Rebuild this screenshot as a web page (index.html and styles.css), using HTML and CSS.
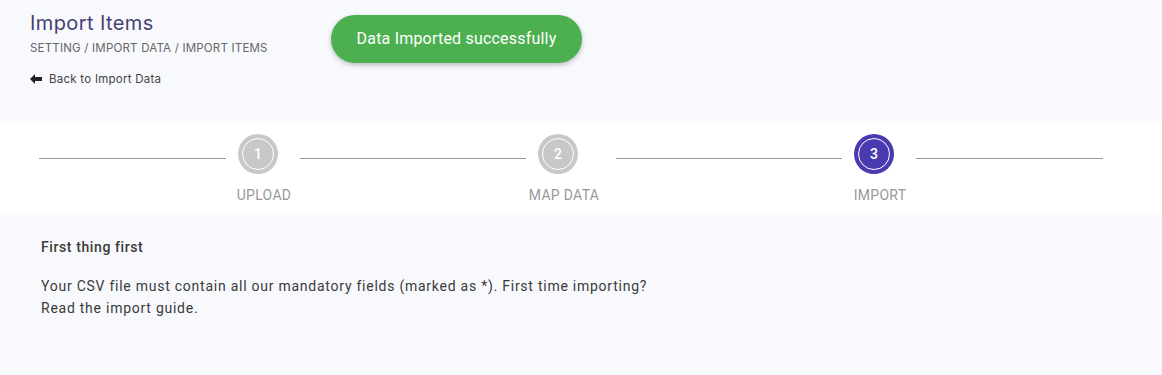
FILE: index.html
```html
<!doctype html>
<html>
<head>
<title>Import Items</title>
<link rel="stylesheet" href="styles.css">
</head>
<body>

<div class="header">
	<h1 class="title">Import Items</h1>
	<div class="breadcrumb">SETTING / IMPORT DATA / IMPORT ITEMS</div>
	<a class="back" href="#">
		<svg width="12" height="10" viewBox="0 0 12 10"><path d="M0 5 L5 0 L5 3 L12 3 L12 7 L5 7 L5 10 Z" fill="#222"/></svg>
		Back to Import Data
	</a>
</div>

<div class="toast">Data Imported successfully</div>

<div class="stepper">
	<div class="line first"></div>
	<div class="step">
		<div class="circle"><span>1</span></div>
		<div class="label">UPLOAD</div>
	</div>
	<div class="line"></div>
	<div class="step wide">
		<div class="circle"><span>2</span></div>
		<div class="label">MAP DATA</div>
	</div>
	<div class="line"></div>
	<div class="step">
		<div class="circle active"><span>3</span></div>
		<div class="label">IMPORT</div>
	</div>
	<div class="line first"></div>
</div>

<div class="content">
	<div class="heading">First thing first</div>
	<p>Your CSV file must contain all our mandatory fields (marked as *). First time importing?<br>Read the import guide.</p>
</div>

</body>
</html>
```

FILE: styles.css
```css
body {
	margin: 0px;
	background-color: #f8f9fd;
	font-family: Roboto, "Liberation Sans", sans-serif;
	height: 375px;
	overflow: hidden;
}
.header {
	height: 121px;
	box-sizing: border-box;
	padding: 9px 30px 0px;
	font-family: Inter, "Noto Sans", sans-serif;
}
.title {
	margin: 0px;
	font-size: 20px;
	font-weight: 400;
	line-height: 28px;
	letter-spacing: 0.4px;
	color: #463f72;
}
.breadcrumb {
	margin-top: 3px;
	font-size: 11.5px;
	line-height: 16px;
	letter-spacing: 0.2px;
	color: #666;
}
.back {
	display: flex;
	align-items: center;
	gap: 7px;
	margin-top: 15px;
	font-size: 11.5px;
	line-height: 16px;
	letter-spacing: 0.25px;
	color: #444;
	text-decoration: none;
}
.toast {
	position: absolute;
	left: 331px;
	top: 15px;
	width: 251px;
	height: 48px;
	border-radius: 24px;
	background-color: #4caf50;
	color: #fff;
	font-size: 16px;
	line-height: 48px;
	letter-spacing: 0.2px;
	text-align: center;
	box-shadow: 0px 2px 5px rgba(0, 0, 0, 0.25);
}
.stepper {
	display: flex;
	align-items: flex-start;
	height: 92px;
	box-sizing: border-box;
	padding: 13px 0px 0px 39px;
	background-color: #fff;
}
.line {
	width: 226px;
	height: 1px;
	margin-top: 24px;
	background-color: #999;
}
.line.first {
	width: 187px;
}
.step {
	display: flex;
	flex-direction: column;
	align-items: center;
	width: 40px;
	margin: 0px 22px 0px 12px;
}
.step.wide {
	margin-right: 38px;
}
.circle {
	display: flex;
	align-items: center;
	justify-content: center;
	width: 40px;
	height: 40px;
	border-radius: 50%;
	background-color: #c8c8c8;
}
.circle.active {
	background-color: #4a3ab0;
}
.circle span {
	display: flex;
	align-items: center;
	justify-content: center;
	width: 30px;
	height: 30px;
	border: 1px solid #fff;
	border-radius: 50%;
	color: #fff;
	font-size: 14px;
	font-weight: 500;
}
.label {
	margin-top: 11px;
	padding-left: 12px;
	white-space: nowrap;
	font-size: 14px;
	line-height: 20px;
	letter-spacing: 0.3px;
	color: #999;
}
.content {
	padding: 24px 41px 0px;
	color: #333;
	font-size: 14px;
	letter-spacing: 0.75px;
}
.heading {
	font-weight: 500;
	line-height: 20px;
	letter-spacing: 0.6px;
	color: #3a3a3a;
}
.content p {
	margin: 18px 0px 0px;
	line-height: 22px;
	color: #3a3a3a;
}
```
